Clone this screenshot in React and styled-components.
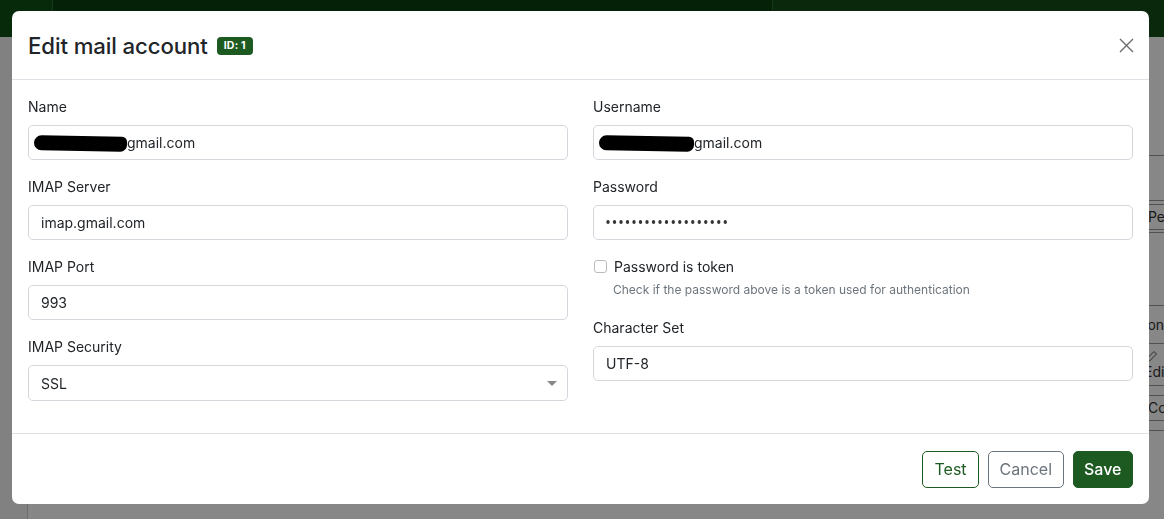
import React from "react";
import styled, { createGlobalStyle } from "styled-components";

const GlobalStyle = createGlobalStyle`
  * { box-sizing: border-box; }
  html, body { margin: 0; padding: 0; }
  body {
    font-family: Inter, "Noto Sans", "Liberation Sans", sans-serif;
    color: #212529;
    background: #fff;
    overflow: hidden;
  }
`;

/* ---------- page behind the dialog ---------- */

const Page = styled.div`
  width: 100vw;
  height: 100vh;
  display: flex;
  flex-direction: column;
  overflow: hidden;
`;

const TopBar = styled.div`
  height: 37px;
  flex-shrink: 0;
  display: flex;
  background: #124d18;
`;

const Brand = styled.div`
  width: 53px;
  background: #0f5016;
  border-right: 1px solid #2c6a31;
`;

const SearchArea = styled.div`
  width: 720px;
  display: flex;
  align-items: center;
  gap: 8px;
  padding-left: 11px;
  background: #0b3f10;
  border-right: 1px solid #2c6a31;
  color: #8fb892;
  font-size: 14px;
`;

const Main = styled.div`
  flex: 1;
  display: flex;
`;

const Sidebar = styled.div`
  width: 28px;
  border-right: 1px solid #ccc;
  background: #f4f4f4;
`;

const Content = styled.div`
  flex: 1;
  display: flex;
  justify-content: flex-end;
  padding-top: 118px;
`;

const Table = styled.div`
  width: 20px;
  display: flex;
  flex-direction: column;
  overflow: hidden;
`;

const TableRow = styled.div`
  height: ${({ h }) => h}px;
  display: flex;
  flex-direction: column;
  justify-content: center;
  border-top: 1px solid #999;
  font-size: 14px;
  line-height: 16px;
  color: #333;
  white-space: nowrap;
`;

const GhostButton = styled.span`
  border: 1px solid #999;
  border-right: 0;
  border-radius: 4px 0 0 4px;
  padding: 4px 0 4px 3px;
`;

/* ---------- dialog ---------- */

const Backdrop = styled.div`
  position: fixed;
  inset: 0;
  background: rgba(0, 0, 0, 0.47);
  padding: 11px 15px 0 12px;
`;

const Modal = styled.div`
  background: #fff;
  border-radius: 7px;
  display: flex;
  flex-direction: column;
`;

const ModalHeader = styled.div`
  height: 69px;
  display: flex;
  align-items: center;
  justify-content: space-between;
  padding: 0 15px 0 16px;
  border-bottom: 1px solid #dee2e6;
`;

const Title = styled.h5`
  margin: 0;
  display: flex;
  align-items: center;
  gap: 9px;
  font-size: 22.2px;
  font-weight: 500;
  letter-spacing: -0.1px;
  color: #212529;
`;

const Badge = styled.span`
  display: inline-flex;
  align-items: center;
  height: 18px;
  padding: 0 7px;
  border-radius: 4px;
  background: #1d5a22;
  color: #fff;
  font-size: 10.5px;
  font-weight: 700;
  letter-spacing: 0.2px;
  margin-top: 1px;
`;

const CloseButton = styled.button`
  width: 15px;
  height: 15px;
  padding: 0;
  border: 0;
  background: none;
  display: flex;
  align-items: center;
  justify-content: center;
  cursor: pointer;
`;

const ModalBody = styled.div`
  display: grid;
  grid-template-columns: 1fr 1fr;
  column-gap: 25px;
  padding: 16px;
  border-bottom: 1px solid #dee2e6;
`;

const Column = styled.div`
  display: flex;
  flex-direction: column;
`;

const Group = styled.div`
  margin-bottom: ${({ mb = 16 }) => mb}px;
`;

const Label = styled.div`
  font-size: 14px;
  line-height: 21px;
  margin-bottom: 8px;
  color: #212529;
`;

const Field = styled.div`
  height: ${({ h = 35 }) => h}px;
  border: 1px solid #d3d7dc;
  border-radius: 5px;
  display: flex;
  align-items: center;
  justify-content: space-between;
  padding: 0 12px;
  font-size: 14px;
  color: #212529;
`;

const Redacted = styled.span`
  display: inline-block;
  width: ${({ w }) => w}px;
  height: 15px;
  margin-left: -7px;
  background: #000;
  border-radius: 9px 6px 8px 9px;
  transform: rotate(1deg);
  vertical-align: middle;
`;

const Dots = styled.span`
  font-size: 4.4px;
  letter-spacing: 2.5px;
  color: #333;
`;

const Caret = styled.span`
  width: 0;
  height: 0;
  border-left: 5px solid transparent;
  border-right: 5px solid transparent;
  border-top: 5px solid #888;
  margin-right: -2px;
`;

const CheckRow = styled.label`
  display: flex;
  align-items: center;
  gap: 7px;
  font-size: 14px;
  line-height: 21px;
`;

const Checkbox = styled.span`
  width: 13px;
  height: 13px;
  margin-left: 1px;
  border: 1px solid #b8bcc0;
  border-radius: 3px;
  background: #fff;
`;

const Help = styled.div`
  font-size: 12px;
  line-height: 18px;
  color: #6c757d;
  margin-top: 4px;
  padding-left: 20px;
`;

const ModalFooter = styled.div`
  height: 70px;
  display: flex;
  align-items: center;
  justify-content: flex-end;
  gap: 9px;
  padding: 0 16px;
`;

const variants = {
  outline: "border: 1px solid #1d5a22; color: #1d5a22; background: #fff; padding: 0 11.5px;",
  secondary: "border: 1px solid #6c757d; color: #6c757d; background: #fff; padding: 0 10.5px;",
  primary: "border: 1px solid #1d5a22; color: #fff; background: #1d5a22; padding: 0 10.5px;",
};

const Button = styled.button`
  height: 37px;
  border-radius: 5px;
  font-family: inherit;
  font-size: 16px;
  font-weight: ${({ variant }) => (variant === "primary" ? 500 : 400)};
  cursor: pointer;
  ${({ variant }) => variants[variant]}
`;

const CloseIcon = () => (
  <svg width="15" height="15" viewBox="0 0 15 15">
    <path d="M1 1L14 14M14 1L1 14" stroke="#6b6b6b" strokeWidth="1.4" fill="none" />
  </svg>
);

const SearchIcon = () => (
  <svg width="14" height="14" viewBox="0 0 14 14">
    <circle cx="6" cy="6" r="5" stroke="#8fb892" strokeWidth="1.5" fill="none" />
  </svg>
);

const PencilIcon = () => (
  <svg width="14" height="14" viewBox="0 0 14 14">
    <path d="M2 12l1-3.5L10 1.5l2.5 2.5-7 7z" stroke="#555" strokeWidth="1" fill="none" />
  </svg>
);

const App = () => {
  return (
    <>
      <GlobalStyle />
      <Page>
        <TopBar>
          <Brand />
          <SearchArea>
            <SearchIcon />
            Search
          </SearchArea>
        </TopBar>
        <Main>
          <Sidebar />
          <Content>
            <Table>
              <TableRow h={45} />
              <TableRow h={32}>
                <GhostButton>Pe</GhostButton>
              </TableRow>
              <TableRow h={73} />
              <TableRow h={38}>ion</TableRow>
              <TableRow h={42}>
                <PencilIcon />
                Edi
              </TableRow>
              <TableRow h={45}>
                <GhostButton>Co</GhostButton>
              </TableRow>
              <TableRow h={40} />
            </Table>
          </Content>
        </Main>
      </Page>

      <Backdrop>
        <Modal>
          <ModalHeader>
            <Title>
              Edit mail account <Badge>ID: 1</Badge>
            </Title>
            <CloseButton aria-label="Close">
              <CloseIcon />
            </CloseButton>
          </ModalHeader>

          <ModalBody>
            <Column>
              <Group>
                <Label>Name</Label>
                <Field>
                  <span>
                    <Redacted w={93} />
                    gmail.com
                  </span>
                </Field>
              </Group>
              <Group>
                <Label>IMAP Server</Label>
                <Field>imap.gmail.com</Field>
              </Group>
              <Group>
                <Label>IMAP Port</Label>
                <Field>993</Field>
              </Group>
              <Group>
                <Label>IMAP Security</Label>
                <Field h={36}>
                  SSL
                  <Caret />
                </Field>
              </Group>
            </Column>

            <Column>
              <Group>
                <Label>Username</Label>
                <Field>
                  <span>
                    <Redacted w={95} />
                    gmail.com
                  </span>
                </Field>
              </Group>
              <Group>
                <Label>Password</Label>
                <Field>
                  <Dots>●●●●●●●●●●●●●●●●●●●</Dots>
                </Field>
              </Group>
              <Group mb={18}>
                <CheckRow>
                  <Checkbox />
                  Password is token
                </CheckRow>
                <Help>Check if the password above is a token used for authentication</Help>
              </Group>
              <Group>
                <Label>Character Set</Label>
                <Field>UTF-8</Field>
              </Group>
            </Column>
          </ModalBody>

          <ModalFooter>
            <Button variant="outline">Test</Button>
            <Button variant="secondary">Cancel</Button>
            <Button variant="primary">Save</Button>
          </ModalFooter>
        </Modal>
      </Backdrop>
    </>
  );
};

export default App;
